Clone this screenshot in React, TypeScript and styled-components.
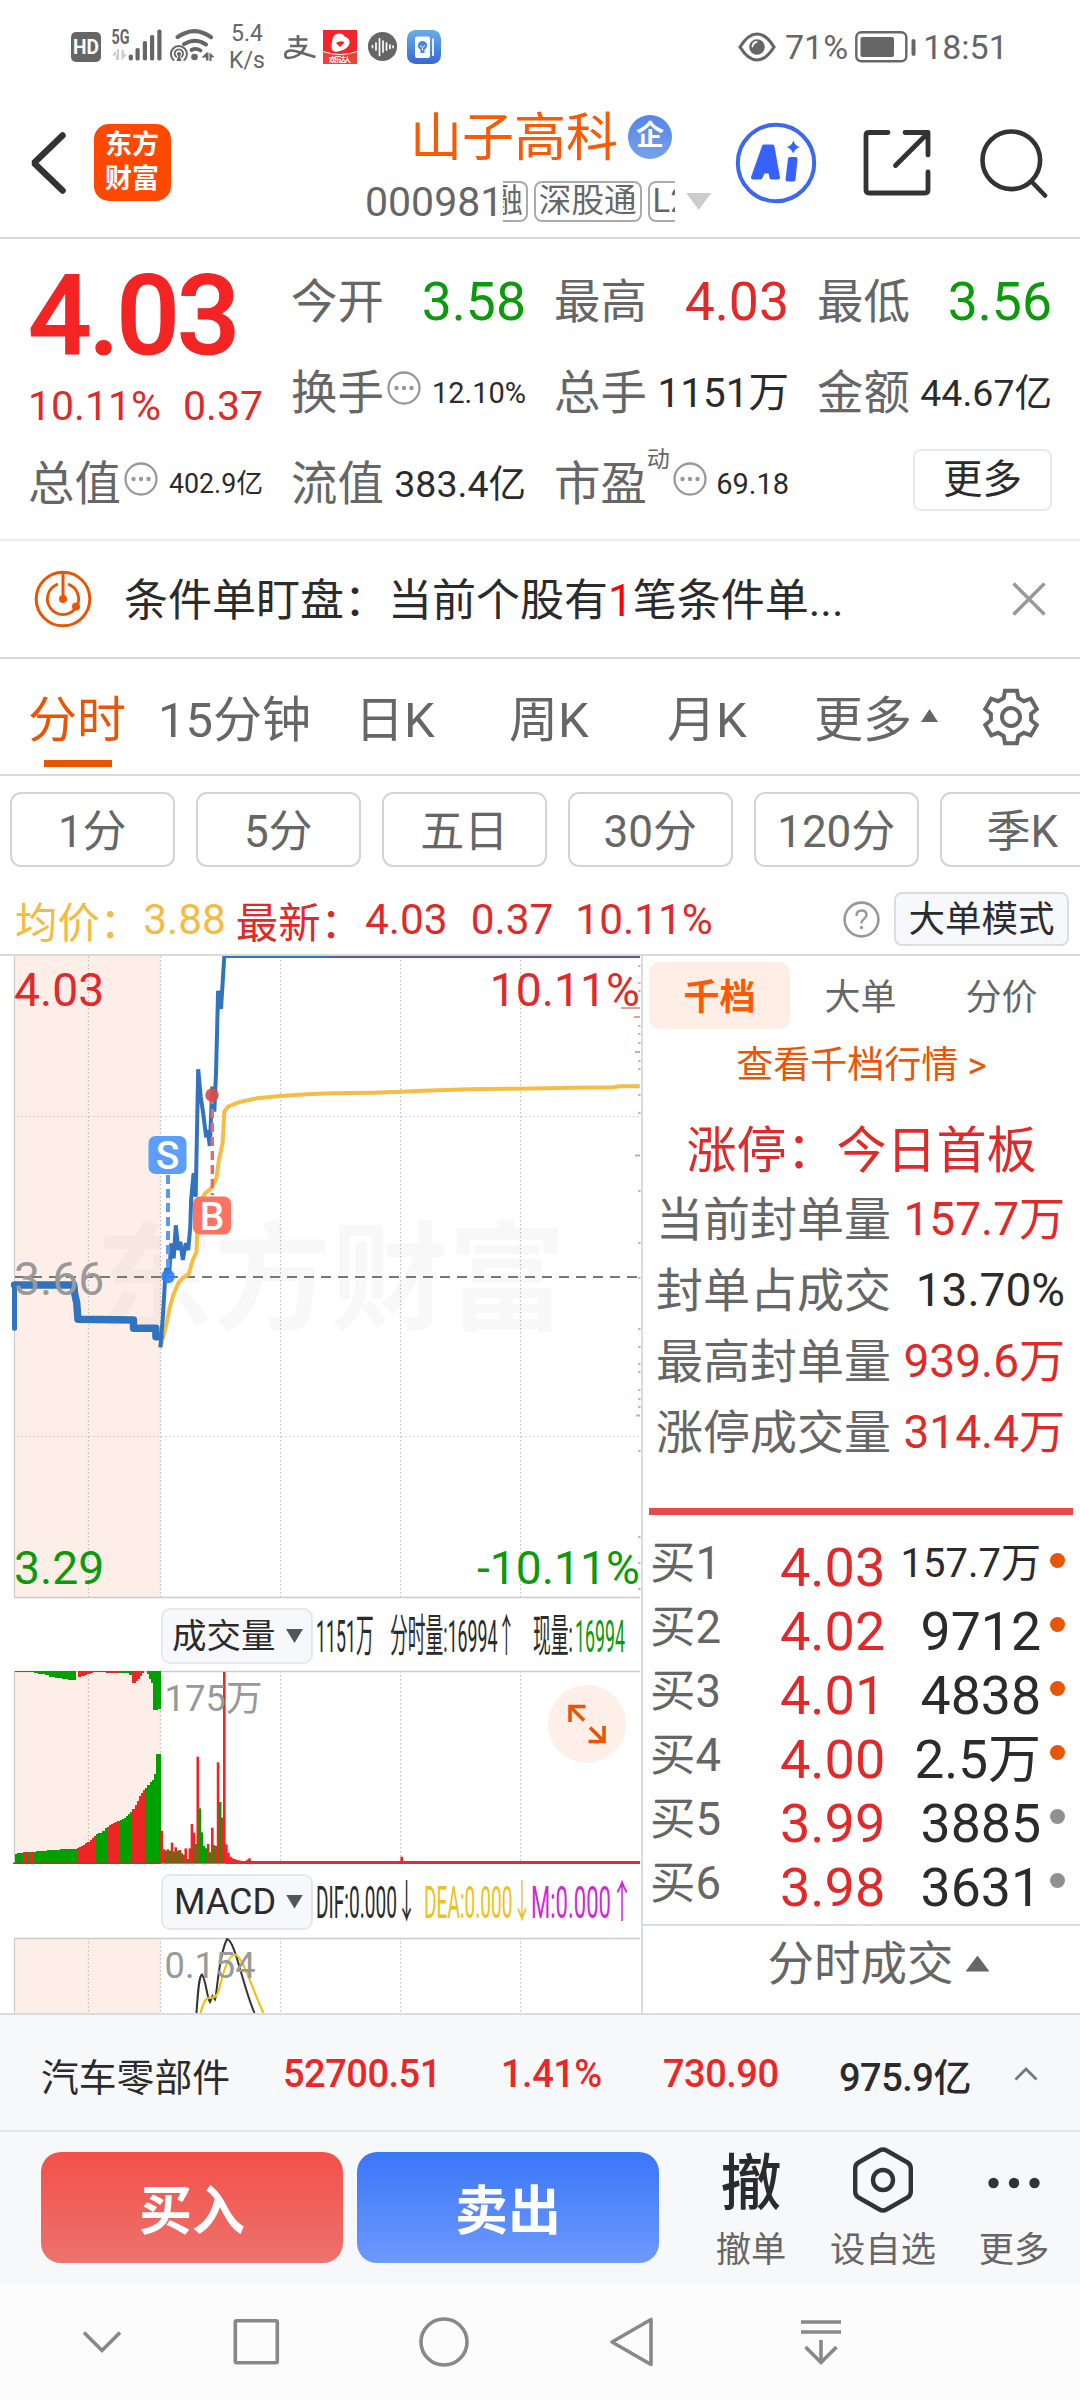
import React from "react";
import styled, { createGlobalStyle, css } from "styled-components";

const RED = "#e02a2a";
const GREEN = "#0a9a0a";
const ORANGE = "#ea5504";
const GREY = "#666";
const INK = "#2b2b2b";
const FONT = `Roboto, "Noto Sans CJK SC", sans-serif`;

const Global = createGlobalStyle`
  * { box-sizing: border-box; }
  body { margin: 0; background: #fff; font-family: ${FONT}; color: ${INK}; }
  svg { display: block; flex: none; }
  svg text { font-family: ${FONT}; }
`;

const Screen = styled.div`
  width: 1080px;
  height: 2400px;
  overflow: hidden;
  display: flex;
  flex-direction: column;
  background: #fff;
  white-space: nowrap;
`;

/* ---------- status bar ---------- */
const StatusBar = styled.div`
  height: 94px;
  flex: none;
  display: flex;
  align-items: center;
  color: ${GREY};
  padding-left: 71px;
`;
const Speed = styled.div`
  width: 50px;
  margin: 0 12px 0 5px;
  font-size: 23px;
  line-height: 27px;
  text-align: center;
`;
const StatusText = styled.span<{ $l: number }>`
  margin-left: ${(p) => p.$l}px;
  font-size: 34px;
  line-height: 40px;
`;
const StatusSpacer = styled.div`
  width: 296px;
`;

/* ---------- header ---------- */
const Header = styled.header`
  height: 145px;
  flex: none;
  display: flex;
  align-items: center;
  padding: 0 31px 6px 28px;
  border-bottom: 2px solid #d9d9d9;
`;
const AppLogo = styled.div`
  width: 77px;
  height: 77px;
  margin-left: 25px;
  border-radius: 15px;
  background: #ff4800;
  color: #fff;
  font-size: 27px;
  font-weight: 700;
  line-height: 34px;
  padding: 4px 0 0 11px;
  white-space: normal;
`;
const TitleBlock = styled.div`
  width: 350px;
  margin-left: 194px;
  padding-top: 10px;
  display: flex;
  flex-direction: column;
`;
const TitleLine = styled.div`
  display: flex;
  align-items: center;
  padding-left: 45px;
  height: 62px;
  font-size: 52px;
  line-height: 62px;
  color: #fa5a05;
`;
const CorpBadge = styled.span`
  width: 44px;
  height: 44px;
  margin: -3px 0 0 10px;
  border-radius: 50%;
  background: linear-gradient(#5584e6, #76a2ea);
  color: #fff;
  font-size: 28px;
  font-weight: 700;
  line-height: 42px;
  text-align: center;
`;
const CodeLine = styled.div`
  display: flex;
  align-items: center;
  height: 52px;
  margin-top: 6px;
  color: ${GREY};
  font-size: 41px;
`;
const TagStrip = styled.div`
  display: flex;
  gap: 6px;
  width: 172px;
  height: 41px;
  overflow: hidden;
  margin-right: 11px;
`;
const Tag = styled.span<{ $cut?: boolean }>`
  flex: none;
  height: 41px;
  border: 2px solid #aaa;
  border-radius: 8px;
  padding: 0 3px;
  font-size: 32.6px;
  line-height: 37px;
  ${(p) => p.$cut && css`margin-left: -18px;`}
`;
const HeaderTools = styled.div`
  display: flex;
  align-items: center;
  margin-left: auto;
`;
const ToolGap = styled.div<{ $w: number }>`
  width: ${(p) => p.$w}px;
`;

/* ---------- quote ---------- */
const Quote = styled.section`
  height: 300px;
  flex: none;
  display: grid;
  grid-template-columns: repeat(4, 235px);
  grid-template-rows: 91px 91px 91px;
  column-gap: 28px;
  padding: 17px 28px 0;
`;
const PriceCell = styled.div`
  grid-row: 1 / span 2;
  color: #f22424;
  display: flex;
  flex-direction: column;
`;
const BigPrice = styled.div`
  font-size: 112px;
  font-weight: 500;
  line-height: 120px;
  letter-spacing: -3.2px;
  -webkit-text-stroke: 1px #f22424;
`;
const Change = styled.div`
  display: flex;
  justify-content: space-between;
  margin-top: 5px;
  font-size: 41px;
  line-height: 50px;
  color: ${RED};
`;
const Cell = styled.div`
  display: flex;
  align-items: center;
  height: 91px;
`;
const CellLabel = styled.span`
  font-size: 46.4px;
  line-height: 60px;
  color: ${GREY};
`;
const CellValue = styled.span<{ $c?: string; $s: number }>`
  margin-left: auto;
  font-size: ${(p) => p.$s}px;
  line-height: 60px;
  color: ${(p) => p.$c || INK};
`;
const Sup = styled.span`
  align-self: flex-start;
  margin-top: 7px;
  font-size: 23px;
  line-height: 30px;
  color: ${GREY};
`;
const MoreButton = styled.button`
  width: 139px;
  height: 62px;
  margin: 11px 0 0 auto;
  padding: 0;
  border: 2px solid #e6e8ea;
  border-radius: 8px;
  background: #fff;
  font: 39.5px / 56px ${FONT};
  color: ${INK};
`;

/* ---------- notice ---------- */
const Notice = styled.section`
  height: 120px;
  flex: none;
  display: flex;
  align-items: center;
  padding: 0 34px 0 34px;
  border-top: 2px solid #ececec;
  border-bottom: 2px solid #d9d9d9;
  font-size: 44px;
  line-height: 60px;
`;
const NoticeText = styled.span`
  margin-left: 32px;
  padding-top: 3px;
  flex: 1;
`;
const Hot = styled.span`
  color: #f00;
`;

/* ---------- period tabs ---------- */
const Tabs = styled.nav`
  height: 117px;
  flex: none;
  display: flex;
  padding-left: 28px;
  border-bottom: 2px solid #d9d9d9;
`;
const Tab = styled.div<{ $w: number; $on?: boolean }>`
  width: ${(p) => p.$w}px;
  height: 113px;
  display: flex;
  align-items: center;
  font-size: 49px;
  color: ${(p) => (p.$on ? ORANGE : GREY)};
  ${(p) =>
    p.$on &&
    css`
      background: linear-gradient(${ORANGE}, ${ORANGE}) 16px 101px / 68px 7px no-repeat;
    `}
`;
const Pills = styled.div`
  height: 99px;
  flex: none;
  display: flex;
  gap: 21.5px;
  padding: 16px 0 0 10px;
  overflow: hidden;
`;
const Pill = styled.div`
  flex: none;
  width: 164.5px;
  height: 75px;
  border: 2px solid #d4d4d4;
  border-radius: 11px;
  font-size: 44px;
  line-height: 76px;
  text-align: center;
  color: ${GREY};
`;
const Summary = styled.div`
  height: 79px;
  flex: none;
  display: flex;
  align-items: center;
  padding: 9px 11px 0 15px;
  font-size: 42.4px;
  color: ${RED};
`;
const SumItem = styled.span<{ $c?: string; $r: number }>`
  margin-right: ${(p) => p.$r}px;
  color: ${(p) => p.$c || RED};
`;
const ModeButton = styled.button`
  width: 175px;
  height: 54px;
  margin-left: 14px;
  padding: 2px 0 0;
  border: 2px solid #d9dce0;
  border-radius: 8px;
  background: #f7f8fb;
  font: 36.5px / 48px ${FONT};
  color: ${INK};
`;
const HelpWrap = styled.div`
  margin-left: auto;
`;

/* ---------- main area ---------- */
const Main = styled.main`
  height: 1059px;
  flex: none;
  display: flex;
  border-top: 2px solid #d9d9d9;
`;
const ChartColumn = styled.div`
  width: 641px;
  display: flex;
  flex-direction: column;
`;
const IndicatorBar = styled.div<{ $h: number }>`
  height: ${(p) => p.$h}px;
  flex: none;
  display: flex;
  align-items: center;
  padding-left: 161px;
`;
const IndicatorSelect = styled.div<{ $s: number; $l: number }>`
  width: 152px;
  height: 56px;
  flex: none;
  display: flex;
  align-items: center;
  justify-content: space-between;
  padding: 0 8px 0 ${(p) => p.$l}px;
  margin-right: 3px;
  border: 2px solid #e6e8ec;
  border-radius: 9px;
  background: #f7f8fb;
  font-size: ${(p) => p.$s}px;
  line-height: 50px;
`;
const Readout = styled.div<{ $w: number; $c?: string }>`
  width: ${(p) => p.$w}px;
  flex: none;
  height: 56px;
  line-height: 58px;
  font-size: 45px;
  color: ${(p) => p.$c || INK};
`;
const Squeeze = styled.span<{ $k: number }>`
  display: inline-block;
  transform: scaleX(${(p) => p.$k});
  transform-origin: 0 50%;
`;

const BookColumn = styled.aside`
  width: 439px;
  border-left: 2px solid #d9dce0;
  display: flex;
  flex-direction: column;
`;
const BookTabs = styled.div`
  display: flex;
  padding: 6px 6px 0;
`;
const BookTab = styled.div<{ $on?: boolean }>`
  width: 141px;
  height: 67px;
  border-radius: 10px;
  font-size: 36px;
  line-height: 73px;
  text-align: center;
  color: ${(p) => (p.$on ? "#fa5a05" : GREY)};
  font-weight: ${(p) => (p.$on ? 700 : 400)};
  background: ${(p) => (p.$on ? "#feeee6" : "transparent")};
`;
const BookLink = styled.div`
  height: 68px;
  line-height: 74px;
  font-size: 37px;
  text-align: center;
  color: ${ORANGE};
`;
const LimitTitle = styled.div`
  height: 87px;
  line-height: 109px;
  font-size: 50px;
  text-align: center;
  color: ${RED};
`;
const LimitRow = styled.div`
  height: 71px;
  display: flex;
  align-items: center;
  justify-content: space-between;
  padding: 0 15px 0 13px;
  font-size: 47px;
  line-height: 71px;
  color: ${GREY};
`;
const LimitValue = styled.span<{ $c?: string }>`
  font-size: 46px;
  color: ${(p) => p.$c || RED};
`;
const RedRule = styled.div`
  height: 7px;
  margin: 40px 7px 13px 6px;
  background: #e64b49;
`;
const BidRow = styled.div`
  height: 64px;
  display: grid;
  grid-template-columns: 130px 118px 143px 1fr;
  align-items: center;
  padding: 0 15px 0 7px;
`;
const BidLabel = styled.span`
  font-size: 45.5px;
  line-height: 64px;
  color: ${GREY};
`;
const BidPrice = styled.span`
  font-size: 54px;
  line-height: 64px;
  padding-top: 8px;
  color: ${RED};
`;
const BidQty = styled.span<{ $s: number }>`
  font-size: ${(p) => p.$s}px;
  line-height: 64px;
  padding-top: ${(p) => (p.$s > 45 ? 8 : 0)}px;
  text-align: right;
`;
const Dot = styled.i<{ $c: string }>`
  width: 15px;
  height: 15px;
  margin-top: -8px;
  border-radius: 50%;
  background: ${(p) => p.$c};
  justify-self: end;
`;
const TradesToggle = styled.div`
  flex: 1;
  margin-top: 12px;
  border-top: 2px solid #d9dce0;
  display: flex;
  justify-content: center;
  align-items: center;
  gap: 12px;
  padding: 0 0 12px 34px;
  font-size: 46.5px;
  line-height: 60px;
  color: ${GREY};
`;

/* ---------- bottom ---------- */
const SectorBar = styled.div`
  height: 119px;
  flex: none;
  display: flex;
  align-items: center;
  border-top: 2px solid #d9dce0;
  border-bottom: 2px solid #e2e4e8;
  background: #f7f8fa;
  padding: 3px 42px 0 41px;
`;
const SectorName = styled.span`
  width: 242px;
  font-size: 37.8px;
`;
const SectorValue = styled.span<{ $w: number; $c?: string }>`
  width: ${(p) => p.$w}px;
  font-size: 38px;
  font-weight: 500;
  letter-spacing: -0.5px;
  color: ${(p) => p.$c || INK};
`;
const Actions = styled.div`
  height: 152px;
  flex: none;
  display: flex;
  padding: 20px 0 0 41px;
  background: #f7f8fa;
`;
const TradeButton = styled.button<{ $bg: string }>`
  width: 302px;
  height: 111px;
  margin-right: 14px;
  padding: 9px 0 0;
  border: 0;
  border-radius: 20px;
  background: ${(p) => p.$bg};
  color: #fff;
  font: 700 53px / 102px ${FONT};
`;
const Shortcut = styled.div<{ $w: number; $l: number }>`
  width: ${(p) => p.$w}px;
  margin-left: ${(p) => p.$l}px;
  display: flex;
  flex-direction: column;
  align-items: center;
`;
const ShortcutIcon = styled.div<{ $t?: number }>`
  height: 66px;
  margin-top: -5px;
  padding-top: ${(p) => p.$t || 0}px;
  display: flex;
  align-items: center;
  font-size: 61px;
  font-weight: 500;
  line-height: 66px;
`;
const ShortcutLabel = styled.span`
  font-size: 35.3px;
  line-height: 50px;
  margin-top: 12px;
  color: ${GREY};
`;
const NavBar = styled.div`
  height: 116px;
  flex: none;
  background: #fcfcfc;
`;

/* ---------- icons ---------- */
const StatusIconsLeft = () => (
  <svg width="146" height="40" viewBox="71 27 146 40" fill={GREY}>
    <rect x="71" y="32" width="30" height="30" rx="5" />
    <text x="73" y="54" fontSize="19.500" fontWeight="700" fill="#fff" textLength="26" lengthAdjust="spacingAndGlyphs">HD</text>
    <text x="111.500" y="43.500" fontSize="19.500" fontWeight="700" textLength="18" lengthAdjust="spacingAndGlyphs">5G</text>
    <path d="M116 50v10h3V49zM112 55.500l5-6v6zM121.500 50v10.500l5.500-6h-3V50z" fill="#ccc" />
    {[[128.700, 54.500], [135.500, 48], [142.800, 41], [150, 35], [157.300, 29.500]].map(([x, y]) => (
      <rect key={x} x={x} y={y} width="4.200" height={60.500 - y} rx="1.800" />
    ))}
    <g fill="none" stroke={GREY} strokeLinecap="round">
      <path d="M177.500 37.200Q194.500 25 211 37.200" strokeWidth="4" />
      <path d="M184 44.200Q195 37 206 44.500" strokeWidth="4" />
      <path d="M191.500 50Q196 47.500 200.500 50.500" strokeWidth="3.800" />
      <path d="M173.500 60a8 8 0 1 1 10.800 0" strokeWidth="2" />
      <path d="M176.200 56.800a4.200 4.200 0 1 1 5.400 0" strokeWidth="1.800" />
    </g>
    <circle cx="179" cy="54" r="2" />
    <path d="M179 54l2.500 7h-5z" />
    <circle cx="194.500" cy="57" r="3.300" />
    <path d="M201.500 57.500l5-5h2V60.500h-2.500v-3zM209.500 52.500v8.500h2v-3.500l3-.5z" />
  </svg>
);

const StatusIconsMid = () => (
  <svg width="158" height="40" viewBox="284 27 158 40">
    <g fill="none" stroke={GREY} strokeWidth="2.700">
      <path d="M288.500 39.500h19M298 35v10.500M290 46h15.500C302 54 295 58 288.500 58c-5 0-4.500-7.500 2.500-7.500 6 0 14 4 24.500 6.500" />
    </g>
    <rect x="323" y="30" width="34" height="34" fill="#f4242a" />
    <path d="M323 52q17 6 34 0v12h-34z" fill="#e8423a" />
    <path d="M333 37.500c2-5 10-5 11.500-1 6.500 1.500 6.500 8 2 11.500-4 3-11 5-14 2.500-2-2.500-.5-9 .5-13z" fill="#fff" />
    <path d="M336 43q5-3 8.500-.5l-4.500 4.500z" fill="#f4242a" />
    <path d="M323 51.500q17 6 34 0" stroke="#fff" strokeWidth="1" fill="none" />
    <text x="329" y="61.500" fontSize="7" fontWeight="700" fill="#fff" textLength="22">欢乐达人</text>
    <circle cx="382.500" cy="46.500" r="14.600" fill={GREY} />
    <path d="M372.500 45.500v2M376 43v7M379.500 38.500v17M383 41v11M386.500 43v7M390 45v3.500M393 46v1.500" stroke="#fff" strokeWidth="1.700" strokeLinecap="round" />
    <defs>
      <linearGradient id="note" x1="0" y1="0" x2="0" y2="1">
        <stop offset="0" stopColor="#69aeea" />
        <stop offset="1" stopColor="#3768d2" />
      </linearGradient>
    </defs>
    <rect x="407" y="30" width="34" height="34" rx="8.500" fill="url(#note)" />
    <rect x="415" y="36.500" width="15" height="21.500" rx="2" fill="#fff" />
    <path d="M433 38.500v17.500" stroke="#e4eefc" strokeWidth="2" />
    <circle cx="422.500" cy="45.500" r="4.600" fill="#4a84dc" />
    <path d="M420.500 49h4v4h-4z" fill="#4a84dc" />
    <path d="M420 45.500l2.500 2 2.500-2M422.500 47.500v3" stroke="#fff" fill="none" />
  </svg>
);

const EyeIcon = () => (
  <svg width="38" height="30" viewBox="0 0 38 30">
    <path d="M2 15Q10 2 19 2t17 13Q28 28 19 28T2 15z" fill="none" stroke={GREY} strokeWidth="3.200" />
    <circle cx="19" cy="15" r="7.800" fill={GREY} />
    <path d="M14.500 14.500q.5-4 4-4.500" stroke="#fff" strokeWidth="1.800" fill="none" strokeLinecap="round" />
  </svg>
);

const BatteryIcon = () => (
  <svg width="61" height="34" viewBox="0 0 61 34">
    <rect x="1.300" y="2.300" width="50" height="29" rx="5" fill="none" stroke={GREY} strokeWidth="2.400" />
    <rect x="5.500" y="7" width="33.500" height="20" rx="2" fill={GREY} />
    <rect x="56.500" y="9" width="4" height="17" rx="2" fill={GREY} />
  </svg>
);

const BackIcon = () => (
  <svg width="41" height="66" viewBox="0 0 41 66">
    <path d="M34.500 5.500L6 33l28.500 27.500" fill="none" stroke="#333" strokeWidth="6.500" strokeLinecap="round" strokeLinejoin="bevel" />
  </svg>
);

const AiIcon = () => (
  <svg width="82" height="82" viewBox="0 0 82 82">
    <circle cx="41" cy="41" r="38.200" fill="none" stroke="#3b68ef" strokeWidth="4" />
    <g fill="#3762ff" stroke="#3762ff" strokeWidth="4" strokeLinejoin="round">
      <path fillRule="evenodd" d="M29 24.500h8.500L43 55.500h-6.500l-1.200-6h-7l-2.800 6h-7.500zM31.500 44h3l-.7-5z" />
      <path d="M55 37h5.500L58.500 57.500h-6z" />
    </g>
    <path d="M58.500 18.500q1.500 5.500 6.500 6.500-5 1.500-7 6.500-1.500-5-6.500-6.500 5-1 7-6.500z" fill="#3762ff" />
  </svg>
);

const ShareIcon = () => (
  <svg width="68" height="68" viewBox="0 0 68 68">
    <g fill="none" stroke="#333" strokeWidth="4.800" strokeLinecap="round" strokeLinejoin="round">
      <path d="M25 3.500H6q-3 0-3 3V61q0 3 3 3h56q3 0 3-3V43" />
      <path d="M42 3.500h23V26M64 5L32.500 36.500" />
    </g>
  </svg>
);

const SearchIcon = () => (
  <svg width="70" height="70" viewBox="0 0 70 70">
    <g fill="none" stroke="#333" strokeWidth="4.600" strokeLinecap="round">
      <circle cx="32.300" cy="32.300" r="28.800" />
      <path d="M53.500 54.500L66 67.500" />
    </g>
  </svg>
);

const Tri = styled.i<{ $w: number; $h: number; $c: string; $up?: boolean; $l?: number }>`
  flex: none;
  width: ${(p) => p.$w}px;
  height: ${(p) => p.$h}px;
  margin-left: ${(p) => p.$l || 0}px;
  background: ${(p) => p.$c};
  clip-path: ${(p) => (p.$up ? "polygon(50% 0, 100% 100%, 0 100%)" : "polygon(0 0, 100% 0, 50% 100%)")};
`;

const InfoSvg = styled.svg`
  margin: -9px 0 0 3px;
`;
const InfoIcon = () => (
  <InfoSvg width="34" height="34" viewBox="0 0 34 34">
    <circle cx="17" cy="17" r="15.500" fill="none" stroke="#999" strokeWidth="2.300" />
    {[9.500, 17, 24.500].map((x) => <circle key={x} cx={x} cy="17" r="2.200" fill="#999" />)}
  </InfoSvg>
);

const RadarIcon = () => (
  <svg width="58" height="58" viewBox="0 0 58 58">
    <g fill="none" stroke={ORANGE} strokeWidth="3">
      <circle cx="29" cy="29" r="26.800" />
      <path d="M24 14.200a15.600 15.600 0 1 0 10 0" strokeWidth="2.800" />
      <path d="M29 2v27" />
    </g>
    <circle cx="29" cy="29" r="4" fill={ORANGE} />
    <circle cx="42" cy="36.500" r="4" fill={ORANGE} />
  </svg>
);

const CloseIcon = () => (
  <svg width="34" height="34" viewBox="0 0 34 34">
    <path d="M1.500 1.500l31 31M32.500 1.500l-31 31" stroke="#999" strokeWidth="3.400" />
  </svg>
);

const GEAR = Array.from({ length: 6 }, (_, i) => {
  const a = (i * Math.PI) / 3;
  return [[-7.300, -19], [-6, -26.300], [6, -26.300], [7.300, -19]]
    .map(([x, y]) => `${(x * Math.cos(a) - y * Math.sin(a)).toFixed(2)},${(x * Math.sin(a) + y * Math.cos(a)).toFixed(2)}`)
    .join(" ");
}).join(" ");
const GearSvg = styled.svg`
  margin: 28px 0 0 42px;
`;
const GearIcon = () => (
  <GearSvg width="60" height="60" viewBox="-30 -30 60 60">
    <g fill="none" stroke={GREY} strokeWidth="4">
      <polygon points={GEAR} />
      <circle r="9" />
    </g>
  </GearSvg>
);

const HelpIcon = () => (
  <svg width="37" height="37" viewBox="0 0 37 37">
    <circle cx="18.500" cy="18.500" r="16.900" fill="none" stroke="#999" strokeWidth="2.600" />
    <path d="M13.500 15q0-5.500 5-5.500t5 4.500c0 3.500-5 4-5 8.500" fill="none" stroke="#999" strokeWidth="2.500" />
    <circle cx="18.500" cy="26.500" r="1.700" fill="#999" />
  </svg>
);

/* ---------- charts ---------- */
const gx = (v: number) => v / 2.412;
const line = (pts: number[][], top: number) =>
  pts.map(([x, y]) => `${gx(x).toFixed(1)},${(top + y / 3).toFixed(1)}`).join(" ");

const AUCTION = [[35, 1165], [35, 1035], [178, 1035], [180, 1060], [185, 1088], [188, 1138], [322, 1140], [322, 1165], [376, 1165], [376, 1190], [386, 1190]];
const PRICE = [[387, 1222], [393, 1130], [399, 1000], [401, 985], [408, 1000], [413, 910], [419, 955], [424, 856], [430, 930], [435, 905], [441, 960], [448, 910], [454, 930], [459, 860], [461, 780], [467, 700], [472, 770], [478, 388], [484, 470], [490, 520], [497, 592], [501, 570], [506, 618], [512, 440], [517, 515], [521, 400], [526, 152], [533, 207], [541, 48], [1543, 48]];
const AVERAGE = [[387, 1222], [400, 1160], [410, 1100], [418, 1065], [430, 1030], [440, 1015], [455, 1003], [465, 960], [474, 935], [476, 870], [482, 790], [495, 760], [510, 745], [522, 715], [528, 660], [537, 610], [541, 515], [550, 500], [580, 485], [620, 475], [676, 468], [740, 463], [800, 460], [900, 458], [966, 455], [1020, 452], [1130, 448], [1255, 446], [1380, 443], [1480, 442], [1495, 439], [1543, 439]];

const Grid = ({ top, bottom }: { top: number; bottom: number }) => (
  <g>
    <rect x="14.500" y={top} width="146" height={bottom - top} fill="#fdeee7" />
    {[88.500, 160.500, 280.500, 400.500, 520.500].map((x) => (
      <path key={x} d={`M${x} ${top}V${bottom}`} stroke="#bdbdbd" strokeWidth="1.200" strokeDasharray="1.500 2.500" />
    ))}
    <path d={`M14.500 ${top}V${bottom}`} stroke="#ccc" strokeWidth="1.200" />
  </g>
);

const TICKS = [965, 982, 990, 1025, 1033, 1042, 1060, 1068, 1094, 1112, 1190, 1242, 1277, 1328, 1346, 1363, 1371, 1389, 1398, 1406, 1450, 1536, 1562, 1588];

const PriceChart = () => (
  <svg width="641" height="646" viewBox="0 956 641 646">
    <Grid top={956} bottom={1597} />
    <text x="96" y="1321" fontSize="118" fontWeight="700" fill="#000" fillOpacity="0.028" textLength="470">东方财富</text>
    {[1116.500, 1436.500].map((y) => (
      <path key={y} d={`M17 ${y}H640`} stroke="#c8c8c8" strokeWidth="1.200" strokeDasharray="1.500 2.500" />
    ))}
    <path d="M14 1597.500H640" stroke="#ccc" strokeWidth="1.500" />
    <path d="M15 1277H640" stroke="#777" strokeWidth="1.800" strokeDasharray="10 7" />
    {TICKS.map((y) => <rect key={y} x="638" y={y} width="2.500" height="2" fill="#eaa" />)}
    {[[621, 1007], [634, 1016], [635, 1051], [635, 1154.500], [636, 1414.500]].map(([x, y]) => (
      <rect key={y} x={x} y={y} width={640 - x} height="2" fill="#dfa0a0" />
    ))}
    <polyline points={line(AVERAGE, 940)} fill="none" stroke="#f5bd45" strokeWidth="4" strokeLinejoin="round" />
    <polyline points={line(AUCTION.slice(0, 2), 940)} fill="none" stroke="#3273c0" strokeWidth="5" strokeLinecap="round" />
    <polyline points={line(AUCTION.slice(1), 940)} fill="none" stroke="#3273c0" strokeWidth="7.400" strokeLinejoin="round" strokeLinecap="round" />
    <polyline points={line(PRICE, 940)} fill="none" stroke="#3273c0" strokeWidth="4" strokeLinejoin="miter" strokeMiterlimit="2" />
    <path d="M328 956.500H640" stroke="#5c5a98" strokeWidth="3" />
    <path d="M168 1175V1270" stroke="#5a9be8" strokeWidth="4" strokeDasharray="9 5" />
    <path d="M212.300 1095V1195" stroke="#e86a60" strokeWidth="3.400" strokeDasharray="9 5" />
    <circle cx="168" cy="1276.500" r="6.800" fill="#2f80f5" fillOpacity="0.900" />
    <circle cx="212" cy="1095" r="6.800" fill="#dd4b4b" fillOpacity="0.900" />
    <rect x="148.500" y="1136" width="38" height="38" rx="7" fill="#5c9ffb" />
    <text x="167.500" y="1169" fontSize="39" fontWeight="500" fill="#fff" textAnchor="middle">S</text>
    <rect x="193" y="1196.500" width="38" height="38" rx="7" fill="#fa7260" />
    <text x="212" y="1229.500" fontSize="39" fontWeight="500" fill="#fff" textAnchor="middle">B</text>
    <g fontSize="46.300">
      <text x="14" y="1005.500" fill={RED}>4.03</text>
      <text x="640" y="1005.500" fill={RED} textAnchor="end">10.11%</text>
      <text x="14" y="1294.500" fill="#999">3.66</text>
      <text x="14" y="1583.500" fill={GREEN}>3.29</text>
      <text x="640" y="1583.500" fill={GREEN} textAnchor="end">-10.11%</text>
    </g>
  </svg>
);

const at = (stops: number[][], x: number) => {
  for (let i = 1; i < stops.length; i++) {
    const [x0, y0] = stops[i - 1];
    const [x1, y1] = stops[i];
    if (x <= x1) return y0 + ((y1 - y0) * (x - x0)) / (x1 - x0);
  }
  return stops[stops.length - 1][1];
};
const RISE = [[35, 582], [57, 577], [82, 575], [130, 569], [182, 567], [200, 556], [210, 548], [220, 538], [230, 525], [245, 517], [256, 502], [270, 492], [288, 482], [303, 472], [318, 455], [330, 428], [340, 400], [350, 388], [360, 370], [371, 355], [375, 330], [377, 283], [386, 283]];
const RISE_RED = [[57, 68], [72, 82], [182, 230], [256, 288], [318, 350]];
const isRise = (x: number) => RISE_RED.some(([a, b]) => x >= a && x < b);
const HANG: [number, number, number, number, string][] = [
  [35, 82, 37, 37, "g"], [82, 118, 39, 45, "g"], [118, 180, 50, 61, "g"], [187, 228, 51, 37, "r"], [228, 256, 37, 37, "g"],
  [256, 286, 40, 38, "r"], [286, 312, 38, 38, "g"], [312, 319, 44, 66, "g"], [319, 326, 70, 70, "r"], [326, 345, 64, 40, "r"],
  [355, 370, 42, 70, "g"], [370, 385, 150, 148, "g"],
];
const VOLUME: [number, number, string][] = [
  [390, 512, "r"], [396, 568, "r"], [401, 572, "g"], [405, 568, "r"], [410, 572, "g"], [415, 548, "r"], [420, 575, "g"], [424, 562, "r"],
  [429, 572, "g"], [434, 570, "r"], [439, 580, "g"], [443, 585, "r"], [448, 565, "r"], [453, 597, "g"], [458, 565, "r"], [463, 492, "r"],
  [468, 518, "r"], [472, 552, "g"], [477, 290, "r"], [482, 445, "g"], [487, 517, "g"], [492, 558, "g"], [497, 565, "g"], [502, 552, "r"],
  [507, 577, "g"], [512, 503, "r"], [516, 555, "g"], [521, 558, "r"], [526, 307, "r"], [531, 426, "g"], [536, 473, "r"], [541, 36, "r"],
  [546, 553, "r"], [551, 578, "r"], [556, 590, "r"], [561, 595, "r"], [566, 597, "r"], [571, 600, "r"], [577, 601, "r"], [597, 599, "r"],
  [602, 595, "r"], [969, 590, "r"],
];
const tone = (t: string) => (t === "r" ? "#ee2525" : "#00a000");

const VolumeChart = () => {
  const steps = Array.from({ length: 68 }, (_, i) => 35 + i * 5.170);
  const hangs = HANG.flatMap(([a, b, y0, y1, t]) => {
    const n = Math.max(1, Math.round((b - a) / 5.170));
    return Array.from({ length: n }, (_, i) => ({
      x: a + ((b - a) * i) / n,
      w: (b - a) / n,
      y: n > 1 ? y0 + ((y1 - y0) * i) / (n - 1) : y0,
      t,
    }));
  });
  return (
    <svg width="641" height="196" viewBox="0 1670 641 196">
      <Grid top={1671} bottom={1864} />
      <path d="M14 1671.500H640" stroke="#ccc" strokeWidth="1.500" />
      <g shapeRendering="crispEdges">
        {hangs.map((h) => (
          <rect key={h.x} x={gx(h.x)} y="1671" width={gx(h.w) + 0.900} height={(h.y - 33) / 3} fill={tone(h.t)} />
        ))}
        {steps.map((x) => (
          <rect key={x} x={gx(x)} y={1660 + at(RISE, x + 2) / 3} width="3" height={(611 - at(RISE, x + 2)) / 3} fill={tone(isRise(x + 2) ? "r" : "g")} />
        ))}
      </g>
      {VOLUME.map(([x, y, t]) => (
        <rect key={x} x={gx(x) - 1.300} y={1660 + y / 3} width="2.600" height={(611 - y) / 3} fill={tone(t)} />
      ))}
      <rect x="226" y="1861" width="414" height="3" fill="#dc2f2f" />
      <path d="M13 1863.200H160" stroke="#b33a1c" strokeWidth="1.500" />
      <text x="164.500" y="1711" fontSize="36.500" fill="#999">175万</text>
      <circle cx="587" cy="1724" r="39" fill="#fef0e8" />
      <g fill="none" stroke={ORANGE} strokeWidth="3.600">
        <path d="M570 1722V1706.500H585.500M570.500 1707L584 1720.500" />
        <path d="M604 1726V1741.500H588.500M603.500 1741L590 1727.500" />
      </g>
    </svg>
  );
};

const MacdChart = () => (
  <svg width="641" height="76" viewBox="0 1937 641 76">
    <Grid top={1938} bottom={2014} />
    <path d="M14 1938.500H640" stroke="#ccc" strokeWidth="1.500" />
    <path d="M196.500 2013C198 1990 199 1976 202 1974.500C206 1980 206.500 1996 210 2002L212.500 1996L215 1999.500C217.500 1992 218 1958 227 1939C235 1940 243 1987 254.500 2013" fill="none" stroke="#333" strokeWidth="2" />
    <path d="M200.500 2013C204 2000 207 1997 210 1998C213 1997 216 1999 219 1990C223 1972 228 1955 235 1954.500C243 1956 254 1994 263.500 2013" fill="none" stroke="#eec01c" strokeWidth="2.200" />
    <text x="164.500" y="1978" fontSize="36.300" fill="#999">0.154</text>
  </svg>
);

const HexIcon = () => (
  <svg width="62" height="66" viewBox="0 0 62 66">
    <g fill="none" stroke="#333" strokeWidth="4.400" strokeLinejoin="round">
      <path d="M27.500 3.500q3.500-2 7 0l21 12q3.300 2 3.300 6v23q0 4-3.300 6l-21 12q-3.500 2-7 0l-21-12q-3.300-2-3.300-6v-23q0-4 3.300-6z" />
      <circle cx="31" cy="33" r="10" />
    </g>
  </svg>
);
const DotsIcon = () => (
  <svg width="52" height="60" viewBox="0 0 52 60" fill="#333">
    <circle cx="5.500" cy="33" r="5.200" />
    <circle cx="26" cy="33" r="5.200" />
    <circle cx="46.500" cy="33" r="5.200" />
  </svg>
);
const ChevronUp = () => (
  <svg width="24" height="14" viewBox="0 0 24 14">
    <path d="M1.500 12.500L12 2l10.500 10.500" fill="none" stroke="#777" strokeWidth="2.800" />
  </svg>
);

const BIDS: [string, string, string, number, string][] = [
  ["买1", "4.03", "157.7万", 40, ORANGE],
  ["买2", "4.02", "9712", 53.600, ORANGE],
  ["买3", "4.01", "4838", 53.600, ORANGE],
  ["买4", "4.00", "2.5万", 53, ORANGE],
  ["买5", "3.99", "3885", 53.600, "#8f8f94"],
  ["买6", "3.98", "3631", 53.600, "#8f8f94"],
];

export default function App() {
  return (
    <Screen>
      <Global />
      <StatusBar>
        <StatusIconsLeft />
        <Speed>5.4<br />K/s</Speed>
        <StatusIconsMid />
        <StatusSpacer />
        <EyeIcon />
        <StatusText $l={9}>71%</StatusText>
        <ToolGap $w={7} />
        <BatteryIcon />
        <StatusText $l={7}>18:51</StatusText>
      </StatusBar>

      <Header>
        <BackIcon />
        <AppLogo>东方<br />财富</AppLogo>
        <TitleBlock>
          <TitleLine>山子高科<CorpBadge>企</CorpBadge></TitleLine>
          <CodeLine>
            000981
            <TagStrip>
              <Tag $cut>融</Tag>
              <Tag>深股通</Tag>
              <Tag>L2</Tag>
            </TagStrip>
            <Tri $w={25} $h={17} $c="#ccc" />
          </CodeLine>
        </TitleBlock>
        <HeaderTools>
          <AiIcon />
          <ToolGap $w={46} />
          <ShareIcon />
          <ToolGap $w={48} />
          <SearchIcon />
        </HeaderTools>
      </Header>

      <Quote>
        <PriceCell>
          <BigPrice>4.03</BigPrice>
          <Change><span>10.11%</span><span>0.37</span></Change>
        </PriceCell>
        <Cell><CellLabel>今开</CellLabel><CellValue $s={53.500} $c={GREEN}>3.58</CellValue></Cell>
        <Cell><CellLabel>最高</CellLabel><CellValue $s={53.500} $c={RED}>4.03</CellValue></Cell>
        <Cell><CellLabel>最低</CellLabel><CellValue $s={53.500} $c={GREEN}>3.56</CellValue></Cell>
        <Cell><CellLabel>换手</CellLabel><InfoIcon /><CellValue $s={29}>12.10%</CellValue></Cell>
        <Cell><CellLabel>总手</CellLabel><CellValue $s={40.500}>1151万</CellValue></Cell>
        <Cell><CellLabel>金额</CellLabel><CellValue $s={37.500}>44.67亿</CellValue></Cell>
        <Cell><CellLabel>总值</CellLabel><InfoIcon /><CellValue $s={26.800}>402.9亿</CellValue></Cell>
        <Cell><CellLabel>流值</CellLabel><CellValue $s={37.500}>383.4亿</CellValue></Cell>
        <Cell><CellLabel>市盈</CellLabel><Sup>动</Sup><InfoIcon /><CellValue $s={29}>69.18</CellValue></Cell>
        <MoreButton>更多</MoreButton>
      </Quote>

      <Notice>
        <RadarIcon />
        <NoticeText>条件单盯盘：当前个股有<Hot>1</Hot>笔条件单...</NoticeText>
        <CloseIcon />
      </Notice>

      <Tabs>
        <Tab $w={130} $on>分时</Tab>
        <Tab $w={197}>15分钟</Tab>
        <Tab $w={154}>日K</Tab>
        <Tab $w={158}>周K</Tab>
        <Tab $w={147}>月K</Tab>
        <Tab $w={125}>更多<Tri $w={17} $h={13} $c={GREY} $up $l={9} /></Tab>
        <GearIcon />
      </Tabs>

      <Pills>
        {["1分", "5分", "五日", "30分", "120分", "季K"].map((t) => <Pill key={t}>{t}</Pill>)}
      </Pills>

      <Summary>
        <SumItem $c="#f3bb44" $r={1}>均价：</SumItem>
        <SumItem $c="#f3bb44" $r={10}>3.88</SumItem>
        <SumItem $r={2}>最新：</SumItem>
        <SumItem $r={23}>4.03</SumItem>
        <SumItem $r={22}>0.37</SumItem>
        <SumItem $r={0}>10.11%</SumItem>
        <HelpWrap><HelpIcon /></HelpWrap>
        <ModeButton>大单模式</ModeButton>
      </Summary>

      <Main>
        <ChartColumn>
          <PriceChart />
          <IndicatorBar $h={68}>
            <IndicatorSelect $s={34.500} $l={9}>成交量<Tri $w={17} $h={14} $c="#555" /></IndicatorSelect>
            <Readout $w={74}><Squeeze $k={0.395}>1151万</Squeeze></Readout>
            <Readout $w={143}><Squeeze $k={0.395}>分时量:16994↑</Squeeze></Readout>
            <Readout $w={42}><Squeeze $k={0.395}>现量:</Squeeze></Readout>
            <Readout $w={50} $c={GREEN}><Squeeze $k={0.395}>16994</Squeeze></Readout>
          </IndicatorBar>
          <VolumeChart />
          <IndicatorBar $h={71}>
            <IndicatorSelect $s={36} $l={11}>MACD<Tri $w={17} $h={14} $c="#555" /></IndicatorSelect>
            <Readout $w={108}><Squeeze $k={0.425}>DIF:0.000↓</Squeeze></Readout>
            <Readout $w={107} $c="#eec01c"><Squeeze $k={0.425}>DEA:0.000↓</Squeeze></Readout>
            <Readout $w={104} $c="#cf28d6"><Squeeze $k={0.490}>M:0.000↑</Squeeze></Readout>
          </IndicatorBar>
          <MacdChart />
        </ChartColumn>

        <BookColumn>
          <BookTabs>
            <BookTab $on>千档</BookTab>
            <BookTab>大单</BookTab>
            <BookTab>分价</BookTab>
          </BookTabs>
          <BookLink>查看千档行情 &gt;</BookLink>
          <LimitTitle>涨停：今日首板</LimitTitle>
          <LimitRow>当前封单量<LimitValue>157.7万</LimitValue></LimitRow>
          <LimitRow>封单占成交<LimitValue $c={INK}>13.70%</LimitValue></LimitRow>
          <LimitRow>最高封单量<LimitValue>939.6万</LimitValue></LimitRow>
          <LimitRow>涨停成交量<LimitValue>314.4万</LimitValue></LimitRow>
          <RedRule />
          {BIDS.map(([label, price, qty, size, dot]) => (
            <BidRow key={label}>
              <BidLabel>{label}</BidLabel>
              <BidPrice>{price}</BidPrice>
              <BidQty $s={size}>{qty}</BidQty>
              <Dot $c={dot} />
            </BidRow>
          ))}
          <TradesToggle>分时成交<Tri $w={24} $h={16} $c={GREY} $up /></TradesToggle>
        </BookColumn>
      </Main>

      <SectorBar>
        <SectorName>汽车零部件</SectorName>
        <SectorValue $w={218} $c="#ee2525">52700.51</SectorValue>
        <SectorValue $w={162} $c="#ee2525">1.41%</SectorValue>
        <SectorValue $w={176} $c="#ee2525">730.90</SectorValue>
        <SectorValue $w={175}>975.9亿</SectorValue>
        <ChevronUp />
      </SectorBar>

      <Actions>
        <TradeButton $bg="linear-gradient(#f4504a, #ed726d)">买入</TradeButton>
        <TradeButton $bg="linear-gradient(#3a76f8, #6e99fd)">卖出</TradeButton>
        <Shortcut $w={90} $l={33}><ShortcutIcon $t={7}>撤</ShortcutIcon><ShortcutLabel>撤单</ShortcutLabel></Shortcut>
        <Shortcut $w={110} $l={32}><ShortcutIcon><HexIcon /></ShortcutIcon><ShortcutLabel>设自选</ShortcutLabel></Shortcut>
        <Shortcut $w={90} $l={31}><ShortcutIcon><DotsIcon /></ShortcutIcon><ShortcutLabel>更多</ShortcutLabel></Shortcut>
      </Actions>

      <NavBar>
        <svg width="1080" height="116" viewBox="0 2284 1080 116" fill="none" stroke="#888" strokeWidth="3.600">
          <path d="M84 2332.500L102 2350.500L120 2332.500" />
          <rect x="235.300" y="2320.800" width="42" height="42" rx="1.500" />
          <circle cx="444" cy="2342" r="23" />
          <path d="M651 2319.500V2364.500L612 2342Z" strokeLinejoin="round" />
          <path d="M801 2322H841M801 2332H841M821 2340V2363M805.500 2347L821 2362.500L836.500 2347" />
        </svg>
      </NavBar>
    </Screen>
  );
}
